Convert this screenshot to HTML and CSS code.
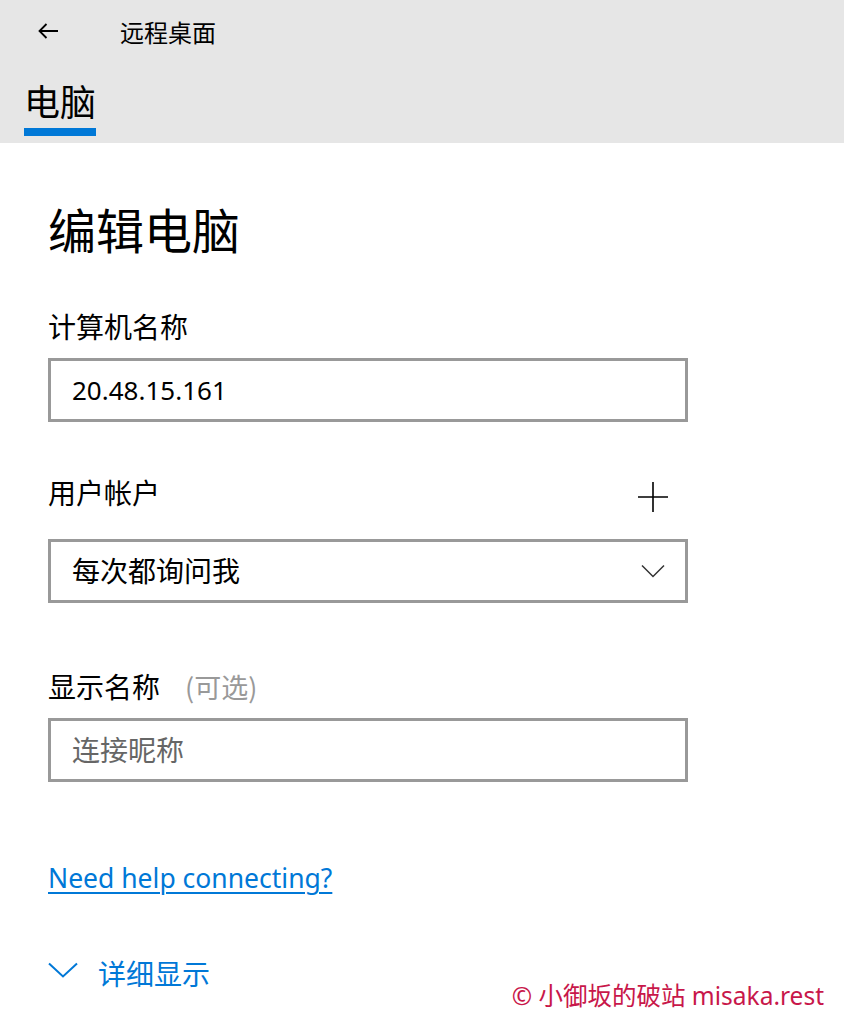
FILE: index.html
```html
<!DOCTYPE html>
<html lang="zh-CN">
<head>
<meta charset="utf-8">
<title>远程桌面</title>
<link rel="stylesheet" href="styles.css">
</head>
<body>
<header class="header">
  <div class="topbar">
    <div class="back">
      <svg width="20" height="16" viewBox="0 0 20 16"><path d="M20 8H1.5M8.5 1L1.5 8l7 7" fill="none" stroke="#000" stroke-width="1.8"/></svg>
    </div>
    <div class="app-title">远程桌面</div>
  </div>
  <div class="tab">
    <div class="tab-label">电脑</div>
    <div class="tab-bar"></div>
  </div>
</header>
<main class="content">
  <h1 class="page-title">编辑电脑</h1>
  <div class="label label-first">计算机名称</div>
  <div class="field"><span class="value">20.48.15.161</span></div>

  <div class="label-row">
    <div class="label">用户帐户</div>
    <svg class="plus" width="30" height="30" viewBox="0 0 30 30"><path d="M15 0V30M0 15H30" stroke="#000" stroke-width="1.6"/></svg>
  </div>
  <div class="field select"><span class="value">每次都询问我</span>
    <svg width="24" height="14" viewBox="0 0 24 14"><path d="M1 1.5L12 12.5 23 1.5" fill="none" stroke="#333" stroke-width="1.5"/></svg>
  </div>

  <div class="label label-third">显示名称<span class="optional">(可选)</span></div>
  <div class="field field-third"><span class="placeholder">连接昵称</span></div>

  <a class="help" href="#">Need help connecting?</a>

  <div class="details">
    <svg width="30" height="16" viewBox="0 0 30 16"><path d="M1 1.5L15 14.5 29 1.5" fill="none" stroke="#0078d7" stroke-width="2"/></svg>
    <span>详细显示</span>
  </div>
</main>
<div class="watermark">© 小御坂的破站 misaka.rest</div>
</body>
</html>
```

FILE: styles.css
```css
* { box-sizing: border-box; }
html, body { margin: 0; padding: 0; }
body {
  width: 844px;
  height: 1028px;
  background: #fff;
  font-family: "Noto Sans", "Noto Sans CJK SC", sans-serif;
  color: #000;
  position: relative;
  overflow: hidden;
}
.header {
  background: #e6e6e6;
  height: 143px;
}
.topbar {
  height: 64px;
  display: flex;
  align-items: center;
}
.back {
  width: 96px;
  height: 64px;
  display: flex;
  align-items: center;
  justify-content: center;
}
.back svg { margin-top: -2px; }
.app-title {
  margin-left: 24px;
  font-size: 24px;
  line-height: 30px;
  font-family: "Noto Sans CJK SC", sans-serif;
}
.tab {
  padding-left: 24px;
  margin-top: 12px;
  display: inline-flex;
  flex-direction: column;
}
.tab-label {
  font-size: 36px;
  line-height: 48px;
  font-family: "Noto Sans CJK SC", sans-serif;
}
.tab-bar {
  margin-top: 4px;
  height: 8px;
  width: 72px;
  background: #0078d7;
}
.content {
  padding-left: 48px;
  display: flex;
  flex-direction: column;
  align-items: flex-start;
}
.page-title {
  margin: 53px 0 0;
  font-weight: normal;
  font-size: 48px;
  line-height: 64px;
  font-family: "Noto Sans CJK SC", sans-serif;
}
.label {
  font-size: 28px;
  line-height: 40px;
  font-family: "Noto Sans CJK SC", sans-serif;
}
.label-first { margin-top: 46px; }
.label-row {
  margin-top: 50px;
  width: 640px;
  padding-right: 20px;
  display: flex;
  justify-content: space-between;
  align-items: center;
}
.plus { margin-top: 10px; }
.field {
  width: 640px;
  height: 64px;
  border: 3px solid #999;
  margin-top: 12px;
  padding: 0 20px 0 21px;
  display: flex;
  align-items: center;
  justify-content: space-between;
}
.value {
  font-size: 26px;
}
.select { margin-top: 27px; }
.select .value {
  font-size: 28px;
  font-family: "Noto Sans CJK SC", sans-serif;
  margin-top: -3px;
}
.label-third { margin-top: 63px; }
.optional {
  color: #999;
  margin-left: 25px;
  font-size: 27px;
}
.field-third { margin-top: 11px; }
.placeholder {
  color: #666;
  font-size: 28px;
  font-family: "Noto Sans CJK SC", sans-serif;
  margin-top: -3px;
}
.help {
  margin-top: 76px;
  color: #0078d7;
  font-size: 26.5px;
  line-height: 40px;
  text-decoration: underline;
  text-underline-offset: 4px;
  text-decoration-thickness: 2px;
}
.details {
  margin-top: 55px;
  display: flex;
  align-items: center;
  color: #0078d7;
  font-size: 28px;
  line-height: 40px;
  font-family: "Noto Sans CJK SC", sans-serif;
}
.details svg { margin-right: 20px; margin-top: -6px; }
.watermark {
  position: absolute;
  right: 20px;
  bottom: 16px;
  color: #c8174a;
  font-size: 24.5px;
  line-height: 32px;
  font-family: "Noto Sans", "Noto Sans CJK SC", sans-serif;
}
```
